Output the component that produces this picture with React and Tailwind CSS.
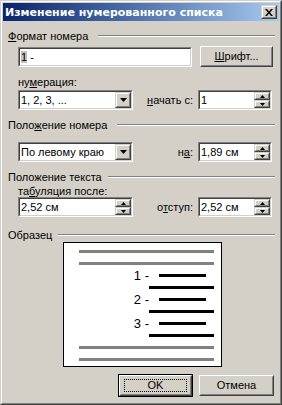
import React from "react";

const face = "bg-[#d4d0c8]";

function Sunken({ className = "", children }) {
  return (
    <div
      className={`border border-t-[#808080] border-l-[#808080] border-b-white border-r-white ${className}`}
    >
      <div className="h-full border border-t-[#404040] border-l-[#404040] border-b-[#d4d0c8] border-r-[#d4d0c8] bg-white flex items-center">
        {children}
      </div>
    </div>
  );
}

function Bevel({ className = "", children }) {
  return (
    <div
      className={`border border-t-[#d4d0c8] border-l-[#d4d0c8] border-b-[#404040] border-r-[#404040] ${face} ${className}`}
    >
      <div className="h-full w-full border border-t-white border-l-white border-b-[#808080] border-r-[#808080] flex items-center justify-center">
        {children}
      </div>
    </div>
  );
}

function PushButton({ className = "", children }) {
  return (
    <div
      className={`border border-t-white border-l-white border-b-[#404040] border-r-[#404040] ${face} ${className}`}
    >
      <div className="h-full w-full border border-t-[#d4d0c8] border-l-[#d4d0c8] border-b-[#808080] border-r-[#808080] flex items-center justify-center">
        {children}
      </div>
    </div>
  );
}

function Combo({ text, className = "" }) {
  return (
    <Sunken className={`h-[20px] ${className}`}>
      <span className="flex-1 pl-[1px] leading-none">{text}</span>
      <Bevel className="w-[16px] h-[16px]">
        <svg width="7" height="4" viewBox="0 0 7 4">
          <path d="M0 0h7L3.5 4z" fill="#000" />
        </svg>
      </Bevel>
    </Sunken>
  );
}

function Spin({ text, className = "" }) {
  return (
    <Sunken className={`h-[20px] ${className}`}>
      <span className="flex-1 pl-[1px] leading-none">{text}</span>
      <div className="flex flex-col w-[16px] h-[16px]">
        <Bevel className="h-[8px] w-[16px]">
          <svg width="5" height="3" viewBox="0 0 5 3">
            <path d="M2.5 0L5 3H0z" fill="#000" />
          </svg>
        </Bevel>
        <Bevel className="h-[8px] w-[16px]">
          <svg width="5" height="3" viewBox="0 0 5 3">
            <path d="M0 0h5L2.5 3z" fill="#000" />
          </svg>
        </Bevel>
      </div>
    </Sunken>
  );
}

function Group({ children, labelW, className = "" }) {
  return (
    <div className={`flex items-center h-[14px] ${className}`}>
      <span className={`ml-[5px] leading-none whitespace-nowrap ${labelW}`}>{children}</span>
      <div className="flex-1 mr-[4px] border-t border-t-[#808080] border-b border-b-white" />
    </div>
  );
}

const U = ({ children }) => <span className="underline underline-offset-[1px]">{children}</span>;

function SampleRow({ kind, n }) {
  if (kind === "gray")
    return (
      <div className="h-[12px] flex items-center">
        <div className="ml-[15px] w-[135px] h-[3px] bg-[#808080]" />
      </div>
    );
  if (kind === "long")
    return (
      <div className="h-[12px] flex items-center">
        <div className="ml-[85px] w-[65px] h-[3px] bg-black" />
      </div>
    );
  return (
    <div className="h-[12px] flex items-center">
      <span className="w-[95px] pr-[10px] text-right text-[13px] leading-none">{n} -</span>
      <div className="w-[47px] h-[3px] bg-black" />
    </div>
  );
}

export default function App() {
  return (
    <div className="w-[282px] h-[405px] font-['Liberation_Sans',sans-serif] text-[11px] text-black border border-t-[#d4d0c8] border-l-[#d4d0c8] border-b-[#404040] border-r-[#404040] bg-[#d4d0c8]">
      <div className="h-full border border-t-white border-l-white border-b-[#808080] border-r-[#808080] p-[1px] flex flex-col">
        {/* title bar */}
        <div className="h-[18px] flex items-center bg-gradient-to-r from-[#0a246a] to-[#a6caf0] pl-[2px] pr-[2px]">
          <span className="flex-1 text-white font-bold font-['DejaVu_Sans',sans-serif] text-[11px] leading-none">
            Изменение нумерованного списка
          </span>
          <Bevel className="w-[16px] h-[14px]">
            <svg width="8" height="7" viewBox="0 0 8 7">
              <path d="M0 0h2l2 2.5L6 0h2L5 3.5 8 7H6L4 4.5 2 7H0l3-3.5z" fill="#000" />
            </svg>
          </Bevel>
        </div>

        <Group className="mt-[8px]" labelW="w-[90px]">
          <U>Ф</U>ормат номера
        </Group>
        <div className="flex mt-[3px] h-[21px]">
          <Sunken className="ml-[15px] w-[174px] h-[20px] self-end">
            <span className="pl-[1px] leading-none">
              <span className="bg-[#c0c0c0]">1</span> -
            </span>
          </Sunken>
          <PushButton className="ml-[8px] w-[73px] h-[21px]">
            <span>
              <U>Ш</U>рифт...
            </span>
          </PushButton>
        </div>

        <div className="mt-[9px] h-[12px] ml-[15px] leading-[12px]">
          ну<U>м</U>ерация:
        </div>
        <div className="flex items-center mt-[2px] h-[20px]">
          <Combo className="ml-[15px] w-[115px]" text="1, 2, 3, ..." />
          <span className="ml-auto mr-[5px] leading-none">
            <U>н</U>ачать с:
          </span>
          <Spin className="w-[74px] mr-[7px]" text="1" />
        </div>

        <Group className="mt-[8px]" labelW="w-[109px]">
          Поло<U>ж</U>ение номера
        </Group>
        <div className="flex items-center mt-[10px] h-[20px]">
          <Combo className="ml-[15px] w-[115px]" text="По левому краю" />
          <span className="ml-auto mr-[5px] leading-none">
            н<U>а</U>:
          </span>
          <Spin className="w-[74px] mr-[7px]" text="1,89 см" />
        </div>

        <Group className="mt-[8px]" labelW="w-[100px]">
          Положение текста
        </Group>
        <div className="mt-[2px] h-[11px] ml-[15px] leading-[11px]">
          та<U>б</U>уляция после:
        </div>
        <div className="flex items-center h-[20px]">
          <Spin className="ml-[15px] w-[115px]" text="2,52 см" />
          <span className="ml-auto mr-[5px] leading-none">
            о<U>т</U>ступ:
          </span>
          <Spin className="w-[74px] mr-[7px]" text="2,52 см" />
        </div>

        <Group className="mt-[11px] h-[13px]" labelW="w-[50px]">
          Образец
        </Group>
        <div className="ml-[60px] w-[159px] h-[125px] border border-black bg-white pt-[2px]">
          <SampleRow kind="gray" />
          <SampleRow kind="gray" />
          <SampleRow kind="short" n="1" />
          <SampleRow kind="long" />
          <SampleRow kind="short" n="2" />
          <SampleRow kind="long" />
          <SampleRow kind="short" n="3" />
          <SampleRow kind="long" />
          <SampleRow kind="gray" />
          <SampleRow kind="gray" />
        </div>

        <div className="flex items-center mt-[7px] h-[23px]">
          <div className="ml-[115px] w-[75px] h-[23px] border border-black">
            <PushButton className="w-full h-full">
              <div className="w-[63px] h-[13px] border border-dotted border-black flex items-center justify-center leading-none">
                OK
              </div>
            </PushButton>
          </div>
          <PushButton className="ml-[6px] w-[75px] h-[21px]">
            <span>Отмена</span>
          </PushButton>
        </div>
      </div>
    </div>
  );
}
